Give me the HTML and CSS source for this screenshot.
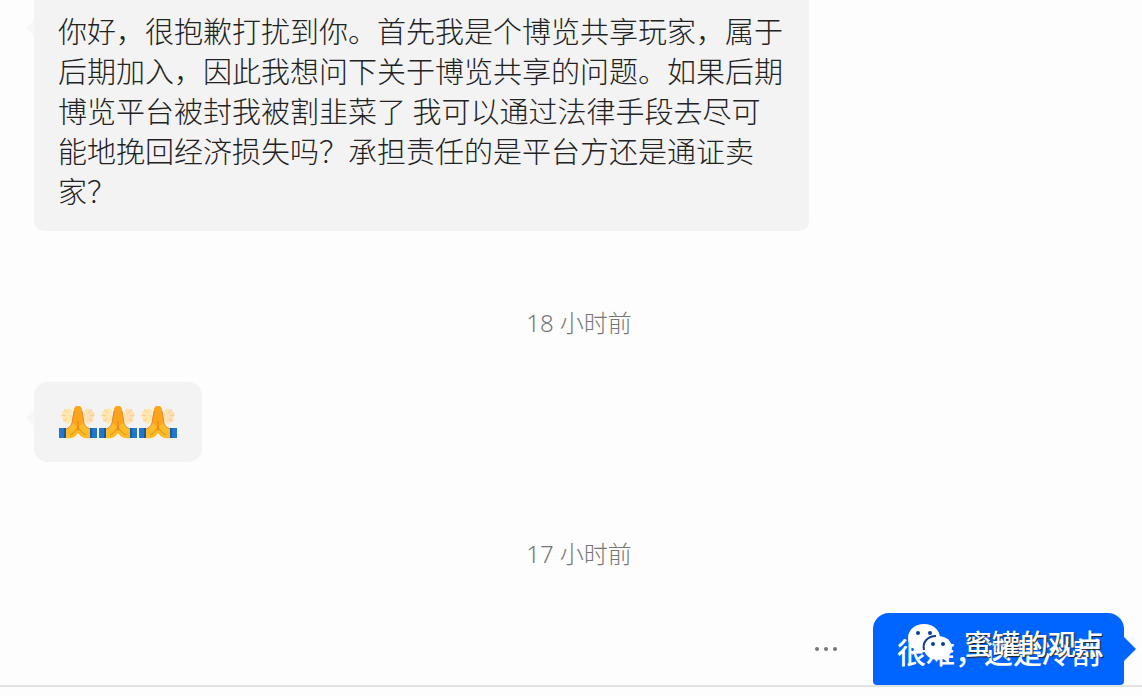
FILE: index.html
```html
<!DOCTYPE html>
<html lang="zh-CN">
  <head>
    <meta charset="UTF-8" />
    <title>私信</title>
    <link rel="stylesheet" href="styles.css">
  </head>

  <body>
    <svg class="sprite" aria-hidden="true">
      <symbol id="pray" viewBox="0 0 40 40">
        <path d="M4 13c0-5 4-7 9-6l2 9-4 6c-5-1-7-4-7-9z" fill="#ffe7ad" />
        <path d="M36 13c0-5-4-7-9-6l-2 9 4 6c5-1 7-4 7-9z" fill="#fde0b4" />
        <path d="M6 7l4 4M3 13l5 1M34 7l-4 4M37 13l-5 1M5 19l4-2M35 19l-4-2" stroke="#f9cc94" stroke-width="1" fill="none" />
        <path d="M20 4c3 0 4 2 4 5l2 12c1 4 4 6 8 6v9c-6 1-11 0-14-5-3 5-8 6-14 5v-9c4 0 7-2 8-6l2-12c0-3 1-5 4-5z" fill="#ffbb25" />
        <path d="M20 4c3 0 4 2 4 5l1 12-5 4-5-4 1-12c0-3 1-5 4-5z" fill="#fba31c" />
        <path d="M20 19v10M20 24c-1 4-4 7-8 9M20 24c1 4 4 7 8 9M16 9l-2 12c-1 3-3 5-6 6M24 9l2 12c1 3 3 5 6 6" stroke="#dd8520" stroke-width="1" fill="none" />
        <path d="M1 26h7v10h-7zM32 26h7v10h-7z" fill="#2277cc" />
        <path d="M6 26h2v10h-2zM32 26h2v10h-2z" fill="#155ba8" />
      </symbol>
    </svg>

    <main class="messages">
      <div class="bubble bubble-question">
        你好，很抱歉打扰到你。首先我是个博览共享玩家，属于<br />后期加入，因此我想问下关于博览共享的问题。如果后期<br />博览平台被封我被割韭菜了 我可以通过法律手段去尽可<br />能地挽回经济损失吗？承担责任的是平台方还是通证卖<br />家？
      </div>

      <time class="time">18 小时前</time>

      <div class="bubble bubble-emoji" role="img" aria-label="合十">
        <svg class="emoji"><use href="#pray" /></svg>
        <svg class="emoji"><use href="#pray" /></svg>
        <svg class="emoji"><use href="#pray" /></svg>
      </div>

      <time class="time">17 小时前</time>

      <div class="reply">
        <button class="more" aria-label="更多"><i></i><i></i><i></i></button>
        <div class="bubble-mine">
          很难，这是冷割
          <div class="watermark">
            <svg class="wechat" viewBox="0 0 46 40">
              <path d="M17 1c9 0 16 6 16 14s-7 14-16 14c-2 0-4 0-6-1l-6 4 2-6c-4-3-6-7-6-11 0-8 7-14 16-14z" fill="#fff" />
              <path d="M31 13c8 0 14 5 14 12 0 4-2 7-5 9l1 5-5-3c-11 3-19-3-19-11 0-7 6-12 14-12z" fill="#fff" />
              <path d="M17 27c-2-8 4-14 12-14" stroke="#123f8c" stroke-width="2" fill="none" />
              <g fill="#0b3f9c">
                <circle cx="11" cy="10" r="2" />
                <circle cx="23" cy="10" r="2" />
                <circle cx="26" cy="21" r="2" />
                <circle cx="36" cy="21" r="2" />
              </g>
            </svg>
            <span>蜜罐的观点</span>
          </div>
        </div>
      </div>
    </main>
    <footer class="composer"></footer>
  </body>
</html>
```

FILE: styles.css
```css
body {
  margin: 0;
  background: #fdfdfd;
  color: #222;
  font-family: "Noto Sans CJK SC", sans-serif;
  font-weight: 300;
  font-size: 29px;
  line-height: 40px;
}

.sprite {
  display: none;
}

.messages {
  display: flex;
  flex-direction: column;
  align-items: flex-start;
  padding: 0 18px 0 34px;
}

.bubble {
  position: relative;
  box-sizing: border-box;
  padding: 20px 24px;
  border-radius: 14px;
  background: #f3f3f4;
}

.bubble::before {
  content: "";
  position: absolute;
  top: 28px;
  left: -8px;
  border: 8px solid transparent;
  border-left: 0;
  border-right-color: #f7f7f8;
}

.bubble-question {
  width: 775px;
  max-width: 100%;
  padding: 10px 24px 21px;
  border-radius: 0 0 10px 10px;
  white-space: nowrap;
}

.bubble-question::before {
  top: 20px;
}

.time {
  align-self: center;
  margin: 72px 0 39px;
  color: #777;
  font-family: "Noto Sans", "Noto Sans CJK SC", sans-serif;
  font-size: 24px;
}

.bubble-emoji {
  display: flex;
}

.emoji {
  width: 40px;
  height: 40px;
}

.reply {
  display: flex;
  align-self: flex-end;
  align-items: center;
  gap: 36px;
}

.more {
  display: flex;
  gap: 5px;
  padding: 0;
  border: 0;
  background: none;
}

.more i {
  width: 4px;
  height: 4px;
  border-radius: 2px;
  background: #777;
}

.bubble-mine {
  position: relative;
  box-sizing: border-box;
  height: 72px;
  padding: 18px 24px 14px;
  border-radius: 16px 16px 4px 4px;
  background: #0064ff;
  color: #fff;
  font-weight: 500;
}

.bubble-mine::after {
  content: "";
  position: absolute;
  top: 24px;
  right: -12px;
  border: 12px solid transparent;
  border-right: 0;
  border-left-color: #0064ff;
}

/* account mark printed over the last message */
.watermark {
  position: absolute;
  top: 10px;
  left: 34px;
  display: flex;
  align-items: center;
  gap: 11px;
  font-size: 28px;
  white-space: nowrap;
  text-shadow: 1px 1px 1px #222;
}

.wechat {
  width: 46px;
  height: 40px;
}

.composer {
  height: 10px;
  border-top: 2px solid #e2e2e2;
  background: #fdfdfd;
}
```
